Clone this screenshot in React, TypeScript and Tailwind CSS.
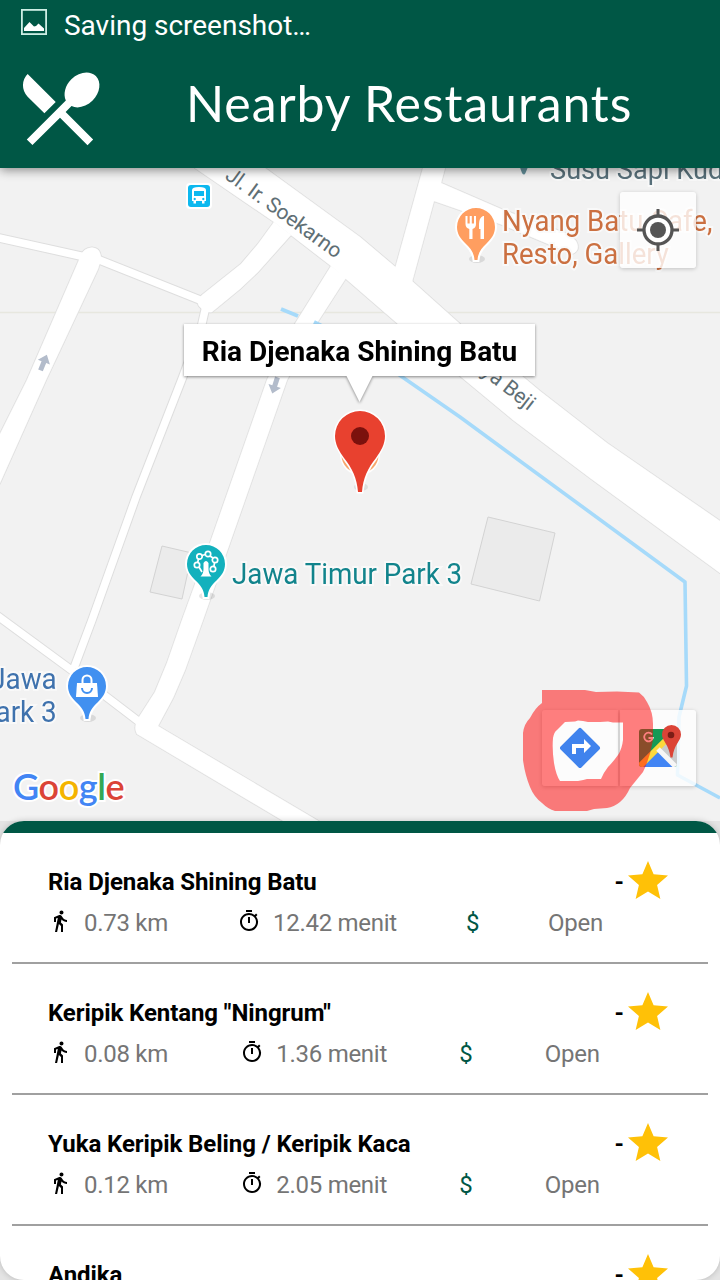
import React from 'react';
import { MdDirectionsWalk, MdOutlineTimer, MdRestaurantMenu, MdStar } from 'react-icons/md';

type Restaurant = { name: string; distance: string; time: string };

const restaurants: Restaurant[] = [
  { name: 'Ria Djenaka Shining Batu', distance: '0.73 km', time: '12.42 menit' },
  { name: 'Keripik Kentang "Ningrum"', distance: '0.08 km', time: '1.36 menit' },
  { name: 'Yuka Keripik Beling / Keripik Kaca', distance: '0.12 km', time: '2.05 menit' },
  { name: 'Andika', distance: '0.15 km', time: '2.40 menit' },
];

const halo = '[paint-order:stroke_fill] [-webkit-text-stroke:4px_rgba(250,250,250,0.9)]';

function StatusBar() {
  return (
    <div className="flex h-[50px] items-center pl-[21px]">
      <svg className="-mt-[7px]" width="26" height="26" viewBox="0 0 26 26">
        <rect x="0.9" y="0.9" width="24.2" height="24.2" fill="none" stroke="#cdeee4" strokeWidth="1.8" />
        <path d="M3 22v-3l5.500-6 4.500 4.500 2-.5 2.500-2.500 5.500 5v2.500z" fill="#fff" />
      </svg>
      <span className="ml-[17px] mt-[2px] text-[28px] leading-none tracking-[-0.020px] text-white">Saving screenshot…</span>
    </div>
  );
}

function Header() {
  return (
    <header className="relative z-10 h-[168px] bg-[#005745] shadow-[0_2px_10px_rgba(0,0,0,0.45)]">
      <StatusBar />
      <div className="flex items-start pl-3 pt-[10px]">
        <MdRestaurantMenu size={96} color="#fff" />
        <h1 className="ml-[78px] mt-[15px] whitespace-nowrap font-[Lato] text-[50px] leading-[56px] tracking-[0.920px] text-white">
          Nearby Restaurants
        </h1>
      </div>
    </header>
  );
}

function PoiPin({ x, y, color, children }: { x: number; y: number; color: string; children: React.ReactNode }) {
  return (
    <g transform={`translate(${x} ${y})`}>
      <ellipse cx="1" cy="32" rx="8" ry="4" fill="#000" opacity="0.1" />
      <path
        d="M0-19A19 19 0 0 0-19 0C-19 7-15.500 11.500-11 16C-5 21.500-2 26-1.500 33H1.500C2 26 5 21.500 11 16C15.500 11.500 19 7 19 0A19 19 0 0 0 0-19Z"
        fill={color}
        stroke="#fff"
        strokeWidth="4"
        paintOrder="stroke"
      />
      {children}
    </g>
  );
}

function MapDrawing() {
  return (
    <svg className="absolute inset-0" width="720" height="653" viewBox="0 168 720 653">
      <rect x="0" y="168" width="720" height="653" fill="#f2f2f2" />
      <path d="M0 312.500H720" stroke="#e7e7df" strokeWidth="1.300" />
      <g fill="#ebebeb" stroke="#d3d3d3" strokeWidth="1">
        <path d="M162 546L192 553L182 599L150 592Z" />
        <path d="M488 517L555 533L539.500 601L471 584Z" />
      </g>
      {[true, false].map((edge) => (
        <g
          key={String(edge)}
          fill="#fff"
          stroke={edge ? '#dedede' : '#fff'}
          strokeWidth={edge ? 2 : 0.4}
          strokeLinejoin="round"
        >
          <g fill="none" strokeWidth={edge ? 9.5 : 7.5}>
            <path d="M-5 237L85 257" />
            <path d="M92 257L205 302" />
            <path d="M206 306L201 328L182 379L136 497L92 620L74 668" />
            <path d="M-5 614L70 669L142 724" />
          </g>
          <path d="M195 168L274 222L331 266L398 324L460 376L513 420L590 478L720 573V521L607 443L540 391L460 324L412 281L360 237L265 168Z" />
          <path d="M423 168L395 269L412 282L434 201L500 224L572 254Q580 251 577 243Q575 238 565 233L501 209L441 183L445 168Z" />
          <path d="M274 222L258 244L241 264L202 295Q196 302 199 306Q205 313 212 312L240 289L258 272L291 235Z" />
          <path d="M79 260Q82 248 92 247.500Q101 248 101 259L98 269L46 380L0 483L-10 500V450L0 434L27 380Z" />
          <path d="M331 266L293 327L267 380L210 543L182 620L167 663L155 692L139 717Q133 727 137 734L285 822H320L158 726L173 698L185 670L203 620L287 380L317 323L346 278Z" />
        </g>
      ))}
      <g fill="none" stroke="#a6dafa" strokeWidth="4">
        <path d="M281 309L298 316" />
        <path d="M314 322L330 330" />
        <path d="M385 365L460 417L685 582L686.500 686L679 717L677.500 775L720 798" strokeWidth="3.600" strokeLinejoin="round" />
      </g>
      <g fill="#b3bccb">
        <path transform="translate(43.500 363) rotate(22)" d="M0-9L6.500-1H2.500V8H-2.500V-1H-6.500Z" />
        <path transform="translate(275 385) rotate(198)" d="M0-9L6.500-1H2.500V8H-2.500V-1H-6.500Z" />
      </g>

      <g>
        <rect x="186" y="183" width="26" height="26" rx="4" fill="#fff" />
        <rect x="188" y="185" width="22" height="22" rx="3" fill="#0cb8ef" />
        <path
          fillRule="evenodd"
          d="M192 190Q192 187 199 187T206 190V201H204.500V203.500H202V201H196V203.500H193.500V201H192ZM194 191V196H204V191ZM194.700 197.800a1.200 1.200 0 1 0 .01 0ZM203.300 197.800a1.200 1.200 0 1 0 .01 0Z"
          fill="#fff"
        />
      </g>

      <path d="M518 162L522 173Q524 176 525.500 173L530 162Z" fill="#638f99" />
      <PoiPin x={476} y={227} color="#ff9e60">
        <path d="M-10.500-11V-3Q-10.500 1-6.700 2V12H-3.500V2Q0 1 0-3V-11H-2V-3.500H-4.200V-11H-6.300V-3.500H-8.500V-11ZM7-11Q3-9 3-3V2H4.500V12H8V-11Z" fill="#fff" />
      </PoiPin>
      <PoiPin x={206} y={564} color="#13b1bd">
        <path d="M-5.500 12.500Q-2.500 10-2.500 5V-1Q0-5 2.500-1V5Q2.500 10 5.500 12.500Z" fill="#fff" />
        <g fill="none" stroke="#fff" strokeWidth="1.700">
          <circle cx="-9" cy="1" r="2.700" />
          <circle cx="-6.500" cy="-7.500" r="2.700" />
          <circle cx="2" cy="-10" r="2.700" />
          <circle cx="9" cy="-4" r="2.700" />
          <circle cx="7" cy="5" r="2.700" />
          <path d="M-4-8.500L-.7-9.500M4-8L7-6M-8.300-1.500L-7.500-5M8.500-1.300L8 2.200M-7 3L-4 8" />
        </g>
      </PoiPin>
      <PoiPin x={87} y={686} color="#4190f0">
        <path d="M-10-3H10L11 11H-11Z" fill="#fff" />
        <path d="M-4.500-3V-6A4.500 4.500 0 0 1 4.500-6V-3" fill="none" stroke="#fff" strokeWidth="2" />
        <path d="M-5 2A5 5 0 0 0 5 2" fill="none" stroke="#4190f0" strokeWidth="2" />
      </PoiPin>

      <circle cx="360" cy="455" r="20" fill="#fff" />
      <circle cx="360" cy="455" r="18.500" fill="#f7a76c" />
      <ellipse cx="361" cy="487" rx="7" ry="4" fill="#dcdfde" />
      <path
        d="M360 411A25 25 0 0 0 335 436C335 444 339 451 344 458C352 468 357 478 358 492H362C363 478 368 468 376 458C381 451 385 444 385 436A25 25 0 0 0 360 411Z"
        fill="#e8412f"
        stroke="#fff"
        strokeWidth="3"
        paintOrder="stroke"
      />
      <circle cx="360" cy="436" r="9" fill="#7b110d" />
    </svg>
  );
}

function MapLabels() {
  return (
    <div className="absolute inset-0 whitespace-nowrap">
      <span className={`absolute left-[550px] top-[-15px] origin-left scale-x-[0.970] text-[28px] leading-[34px] text-[#58707a] ${halo}`}>Susu Sapi Kud</span>
      <span className={`absolute left-[502px] top-[37px] origin-left scale-x-[0.950] text-[29px] leading-[33px] text-[#cb7041] ${halo}`}>
        Nyang Batu Cafe,
        <br />
        Resto, Gallery
      </span>
      <span className={`absolute left-[232px] top-[389px] origin-left scale-x-[0.940] text-[29.500px] leading-[34px] text-[#12848c] ${halo}`}>Jawa Timur Park 3</span>
      <span className={`absolute right-[663px] top-[495px] origin-right scale-x-[0.960] text-right text-[29px] leading-[33px] text-[#3f72ad] ${halo}`}>
        Jawa
        <br />
        Timur Park 3
      </span>
      <span className="absolute left-[221px] top-[-10px] origin-bottom-left rotate-[36deg] text-[21px] leading-[24px] text-[#5f6f75]">Jl. Ir. Soekarno</span>
      <span className="absolute right-[195px] top-[223px] origin-bottom-right rotate-[38deg] text-[21px] leading-[24px] text-[#5f6f75]">Jl. Raya Beji</span>
      <span className="absolute left-[13px] top-[596px] font-[Lato] text-[36px] font-semibold leading-[44px] tracking-[-0.400px] [paint-order:stroke_fill] [-webkit-text-stroke:4px_white]">
        <span className="text-[#4285f4]">G</span>
        <span className="text-[#db4437]">o</span>
        <span className="text-[#f4b400]">o</span>
        <span className="text-[#4285f4]">g</span>
        <span className="text-[#34a853]">l</span>
        <span className="text-[#db4437]">e</span>
      </span>
    </div>
  );
}

function MapControls() {
  const box = 'absolute flex h-[76px] w-[76px] items-center justify-center rounded-[3px] bg-white/80 shadow-[0_1px_4px_rgba(0,0,0,0.2)]';
  return (
    <>
      <div className={`${box} left-[620px] top-[24px]`}>
        <svg width="46" height="46" viewBox="-23 -23 46 46">
          <circle r="14" fill="#fff" stroke="#555" strokeWidth="3.300" />
          <circle r="8" fill="#555" />
          <path d="M0-21V-14M0 14V21M-21 0H-14M14 0H21" stroke="#555" strokeWidth="3" />
        </svg>
      </div>
      <div className={`${box} left-[542px] top-[542px] rounded-r-none`}>
        <svg width="48" height="48" viewBox="0 0 24 24">
          <path fill="#4083ed" d="M21.710 11.290l-9-9a.996.996 0 0 0-1.410 0l-9 9a.996.996 0 0 0 0 1.410l9 9c.39.39 1.020.39 1.410 0l9-9a.996.996 0 0 0 0-1.410z" />
          <path fill="#fff" d="M14 14.500V12h-4v3H8v-5h6V7.500l3.500 3.500z" />
        </svg>
      </div>
      <div className={`${box} left-[620px] top-[542px] rounded-l-none`}>
        <svg width="48" height="48" viewBox="634 724 48 48">
          <defs>
            <clipPath id="tile">
              <rect x="639" y="729" width="38" height="38" rx="3" />
            </clipPath>
          </defs>
          <g clipPath="url(#tile)">
            <rect x="639" y="729" width="38" height="38" fill="#159a55" />
            <path d="M677 729V767L658 748Z" fill="#c9cccd" />
            <path d="M639 769L658 751L677 769Z" fill="#4285f4" />
            <path d="M637 769L670 736" stroke="#fcd93d" strokeWidth="6" />
            <path d="M658 749L677 768" stroke="#f6f6f6" strokeWidth="5" />
          </g>
          <path d="M652 734.500A4.300 4.300 0 1 0 652.700 738H648.500" fill="none" stroke="#fff" strokeWidth="1.800" />
          <path d="M671.500 725A9.500 9.500 0 0 0 662 734.500C662 741 669 744 670.500 757.500H672.500C674 744 681 741 681 734.500A9.500 9.500 0 0 0 671.500 725Z" fill="#db4437" />
          <circle cx="671" cy="735" r="3.300" fill="#7b1d16" />
        </svg>
      </div>
      <svg className="pointer-events-none absolute left-[520px] top-[520px]" width="136" height="126" viewBox="520 688 136 126">
        <path
          fillRule="evenodd"
          fill="rgba(255,0,0,0.5)"
          d="M542 690H585L596 692L617 691.500L639 692.500Q644 696 647 702Q653 712 653 724V740Q650 758 643 772L630 788Q626 797 620 802Q614 807 607 808L594 809L587 811L555 811Q548 809 542 803Q534 797 530 787Q525 775 523 760V733Q524 724 530 718Q535 708 542 703ZM565 722L575 721.500L578 720.500L583 721L588 722H600L608 721.500L613 722.500H623V740Q622 749 618 755Q613 762 608 767Q604 772 601 779H587Q584 780 578 781H560Q556 775 554 763Q552 750 553 738Q554 732 557 730Z"
        />
      </svg>
    </>
  );
}

function InfoWindow() {
  return (
    <div className="absolute left-[184px] top-[156px] flex h-[52px] w-[351px] items-center justify-center bg-white drop-shadow-[0_1px_1.500px_rgba(0,0,0,0.45)]">
      <span className="whitespace-nowrap pt-[4px] text-[28px] font-bold leading-none text-black">Ria Djenaka Shining Batu</span>
      <svg className="absolute left-[162px] top-[51px]" width="27" height="28" viewBox="0 0 27 28">
        <path d="M0 0H27L13.500 27Z" fill="#fff" />
      </svg>
    </div>
  );
}

function RestaurantRow({ item }: { item: Restaurant }) {
  return (
    <li className="h-[131px] shrink-0 border-b-2 border-[#a0a0a0] px-9 pt-[24px]">
      <div className="flex h-12 items-center justify-between">
        <span className="whitespace-nowrap pt-[2px] text-[24px] font-bold leading-7 tracking-[-0.080px] text-black">{item.name}</span>
        <div className="flex items-center">
          <span className="pt-[2px] text-[24px] font-bold leading-7 text-black">-</span>
          <MdStar size={48} color="#ffc107" />
        </div>
      </div>
      <div className="mt-[2px] flex h-8 items-center justify-between text-[24px] leading-8 tracking-[-0.280px] text-[#757575]">
        <div className="flex items-center gap-3">
          <MdDirectionsWalk className="-mt-[4px]" size={24} color="#000" />
          <span>{item.distance}</span>
        </div>
        <div className="flex items-center gap-3">
          <MdOutlineTimer className="-mt-[4px]" size={24} color="#000" />
          <span>{item.time}</span>
        </div>
        <span className="text-[#005745]">$</span>
        <span>Open</span>
        <span />
      </div>
    </li>
  );
}

export default function App() {
  return (
    <div className="flex h-[1280px] w-[720px] flex-col overflow-hidden bg-[#f2f2f2] font-[Roboto,sans-serif]">
      <Header />
      <section className="relative h-[653px] shrink-0 overflow-hidden">
        <MapDrawing />
        <MapLabels />
        <MapControls />
        <InfoWindow />
      </section>
      <section className="h-[459px] shrink-0 bg-[#e4e4e4]">
        <div className="relative h-full overflow-hidden rounded-[24px] bg-white shadow-[0_0_6px_rgba(0,0,0,0.2)]">
          <div className="h-3 bg-[#005745]" />
          <ul className="flex flex-col px-3">
            {restaurants.map((item) => (
              <RestaurantRow key={item.name} item={item} />
            ))}
          </ul>
        </div>
      </section>
    </div>
  );
}
